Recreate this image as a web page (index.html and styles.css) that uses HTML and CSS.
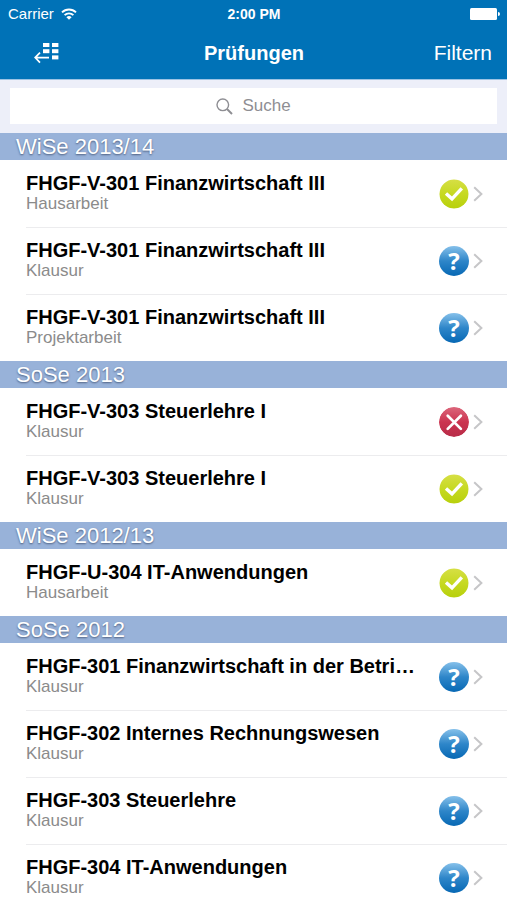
FILE: index.html
```html
<!DOCTYPE html>
<html lang="de">
<head>
<meta charset="utf-8">
<meta name="viewport" content="width=device-width, initial-scale=1">
<title>Prüfungen</title>
<link rel="stylesheet" href="styles.css">
</head>
<body>
<svg class="defs" aria-hidden="true">
  <defs>
    <linearGradient id="green" x1="0" y1="0" x2="0" y2="1"><stop offset="0" stop-color="#d6df45"/><stop offset="0.5" stop-color="#c6d921"/><stop offset="1" stop-color="#b8d00c"/></linearGradient>
    <linearGradient id="red" x1="0" y1="0" x2="0" y2="1"><stop offset="0" stop-color="#dc667b"/><stop offset="0.5" stop-color="#cb3450"/><stop offset="1" stop-color="#b82c48"/></linearGradient>
    <symbol id="passed" viewBox="0 0 30 30"><circle cx="15" cy="15" r="14.5" fill="url(#green)"/><path d="M7 14.4l6 5.4L22.8 9.4" fill="none" stroke="#fff" stroke-width="3.4"/></symbol>
    <symbol id="failed" viewBox="0 0 30 30"><circle cx="15" cy="15" r="15" fill="url(#red)"/><path d="M8.7 8.7l13.2 13.2M21.9 8.7L8.7 21.9" fill="none" stroke="#fff" stroke-width="2.7" stroke-linecap="round"/></symbol>
    <symbol id="chevron" viewBox="0 0 10 16"><path d="M1.2 1.2L8.4 8l-7.2 6.8" fill="none" stroke="#c6c6c8" stroke-width="2"/></symbol>
  </defs>
</svg>
<div class="app">
  <header class="top">
    <div class="status">
      <div class="carrier">Carrier
        <svg width="16" height="12" viewBox="0 0 16 12" aria-hidden="true"><g fill="none" stroke="#fff" stroke-width="1.9"><path d="M1 4.4a10 10 0 0 1 14 0"/><path d="M3.6 7.2a6.2 6.2 0 0 1 8.8 0"/></g><path d="M8 11.8L5.4 9.2a3.7 3.7 0 0 1 5.2 0z" fill="#fff"/></svg>
      </div>
      <div class="clock">2:00 PM</div>
      <svg class="battery" width="30" height="12" viewBox="0 0 30 12" aria-hidden="true"><rect width="27" height="12" rx="1.5" fill="#fff"/><path d="M28 4a2 2 0 0 1 0 4z" fill="#fff"/></svg>
    </div>
    <nav class="nav">
      <button class="back" type="button" aria-label="Zurück">
        <svg width="26" height="22" viewBox="0 0 26 22" aria-hidden="true"><g fill="#fff"><rect x="9" y="1" width="6.4" height="4"/><rect x="18" y="1" width="6.4" height="4"/><rect x="9" y="7.2" width="6.4" height="4"/><rect x="18" y="7.2" width="6.4" height="4"/><rect x="18" y="13.4" width="6.4" height="4"/></g><path d="M15 15.6H1.6M6 10.6l-4.8 5 4.8 5" fill="none" stroke="#fff" stroke-width="1.7"/></svg>
      </button>
      <h1 class="title">Prüfungen</h1>
      <button class="filter" type="button">Filtern</button>
    </nav>
  </header>
  <div class="search">
    <label class="field">
      <svg width="17" height="17" viewBox="0 0 17 17" aria-hidden="true"><circle cx="6.8" cy="6.8" r="5.8" fill="none" stroke="#8e8e93" stroke-width="1.4"/><path d="M11 11l5 5" stroke="#8e8e93" stroke-width="2"/></svg>
      <input type="search" placeholder="Suche" aria-label="Suche">
    </label>
  </div>
  <main class="list">
    <section>
      <h2>WiSe 2013/14</h2>
      <ul>
        <li><a href="#"><span class="text"><span class="name">FHGF-V-301 Finanzwirtschaft III</span><span class="kind">Hausarbeit</span></span><svg class="badge"><use href="#passed"/></svg><svg class="chevron"><use href="#chevron"/></svg></a></li>
        <li><a href="#"><span class="text"><span class="name">FHGF-V-301 Finanzwirtschaft III</span><span class="kind">Klausur</span></span><span class="badge open">?</span><svg class="chevron"><use href="#chevron"/></svg></a></li>
        <li><a href="#"><span class="text"><span class="name">FHGF-V-301 Finanzwirtschaft III</span><span class="kind">Projektarbeit</span></span><span class="badge open">?</span><svg class="chevron"><use href="#chevron"/></svg></a></li>
      </ul>
    </section>
    <section>
      <h2>SoSe 2013</h2>
      <ul>
        <li><a href="#"><span class="text"><span class="name">FHGF-V-303 Steuerlehre I</span><span class="kind">Klausur</span></span><svg class="badge"><use href="#failed"/></svg><svg class="chevron"><use href="#chevron"/></svg></a></li>
        <li><a href="#"><span class="text"><span class="name">FHGF-V-303 Steuerlehre I</span><span class="kind">Klausur</span></span><svg class="badge"><use href="#passed"/></svg><svg class="chevron"><use href="#chevron"/></svg></a></li>
      </ul>
    </section>
    <section>
      <h2>WiSe 2012/13</h2>
      <ul>
        <li><a href="#"><span class="text"><span class="name">FHGF-U-304 IT-Anwendungen</span><span class="kind">Hausarbeit</span></span><svg class="badge"><use href="#passed"/></svg><svg class="chevron"><use href="#chevron"/></svg></a></li>
      </ul>
    </section>
    <section>
      <h2>SoSe 2012</h2>
      <ul>
        <li><a href="#"><span class="text"><span class="name">FHGF-301 Finanzwirtschaft in der Betri…</span><span class="kind">Klausur</span></span><span class="badge open">?</span><svg class="chevron"><use href="#chevron"/></svg></a></li>
        <li><a href="#"><span class="text"><span class="name">FHGF-302 Internes Rechnungswesen</span><span class="kind">Klausur</span></span><span class="badge open">?</span><svg class="chevron"><use href="#chevron"/></svg></a></li>
        <li><a href="#"><span class="text"><span class="name">FHGF-303 Steuerlehre</span><span class="kind">Klausur</span></span><span class="badge open">?</span><svg class="chevron"><use href="#chevron"/></svg></a></li>
        <li><a href="#"><span class="text"><span class="name">FHGF-304 IT-Anwendungen</span><span class="kind">Klausur</span></span><span class="badge open">?</span><svg class="chevron"><use href="#chevron"/></svg></a></li>
      </ul>
    </section>
  </main>
</div>
</body>
</html>
```
FILE: styles.css
```css
* { box-sizing: border-box; }

body {
  margin: 0;
  background: #fff;
  color: #000;
  font-family: "Liberation Sans", Arial, sans-serif;
}

h1, h2, ul { margin: 0; padding: 0; }
ul { list-style: none; }
button { border: 0; padding: 0; background: none; color: inherit; font: inherit; }

.defs { position: absolute; width: 0; height: 0; }

.app { display: flex; flex-direction: column; height: 100vh; }

.top {
  flex: none;
  background: #0072b7;
  color: #fff;
  border-bottom: 1px solid #9cc3e4;
}

.status {
  display: grid;
  grid-template-columns: 1fr auto 1fr;
  align-items: center;
  height: 27px;
  padding: 0 7px 0 8px;
  font-size: 15px;
}
.carrier { display: flex; align-items: center; gap: 7px; }
.clock { font-weight: bold; font-size: 14px; }
.battery { justify-self: end; }

.nav {
  display: grid;
  grid-template-columns: 1fr auto 1fr;
  align-items: center;
  height: 52px;
  padding: 0 15px 0 34px;
}
.back { display: flex; justify-self: start; }
.title { font-size: 20px; margin-right: 18px; }
.filter { justify-self: end; font-size: 21px; }

.search { flex: none; padding: 8px 10px 9px; background: #edeff9; }
.field {
  display: flex;
  align-items: center;
  justify-content: center;
  gap: 9px;
  height: 36px;
  background: #fff;
}
.field input {
  field-sizing: content;
  border: 0;
  padding: 0;
  outline: 0;
  appearance: none;
  background: none;
  font: 17px "Liberation Sans", Arial, sans-serif;
}
.field input::placeholder { color: #8e8e93; }

.list { flex: 1; min-height: 0; overflow-y: auto; scrollbar-width: none; }

h2 {
  height: 27px;
  padding-left: 16px;
  background: #98b2d9;
  color: #fff;
  font-size: 22px;
  font-weight: normal;
  line-height: 27px;
  text-shadow: 0 1px 2px #4d5f80;
}

li { height: 67px; padding-left: 26px; }
li a {
  display: flex;
  align-items: center;
  height: 100%;
  padding-right: 24px;
  color: inherit;
  text-decoration: none;
}
li + li a { border-top: 1px solid #ececee; }

.text { flex: 1; min-width: 0; padding: 0 16px 4px 0; }
.name, .kind { display: block; white-space: nowrap; }
.name {
  overflow: hidden;
  text-overflow: ellipsis;
  font-size: 20px;
  font-weight: bold;
  line-height: 24px;
}
.kind { color: #8b8b8b; font-size: 17px; line-height: 18px; }

.badge { flex: none; width: 30px; height: 30px; border-radius: 50%; }
.open {
  background: linear-gradient(#85c0ea, #2e86c9 50%, #0768b4);
  color: #fff;
  font: bold 24px/30px "Open Sans", sans-serif;
  text-align: center;
}
.chevron { flex: none; width: 10px; height: 16px; margin-left: 4px; }
```
